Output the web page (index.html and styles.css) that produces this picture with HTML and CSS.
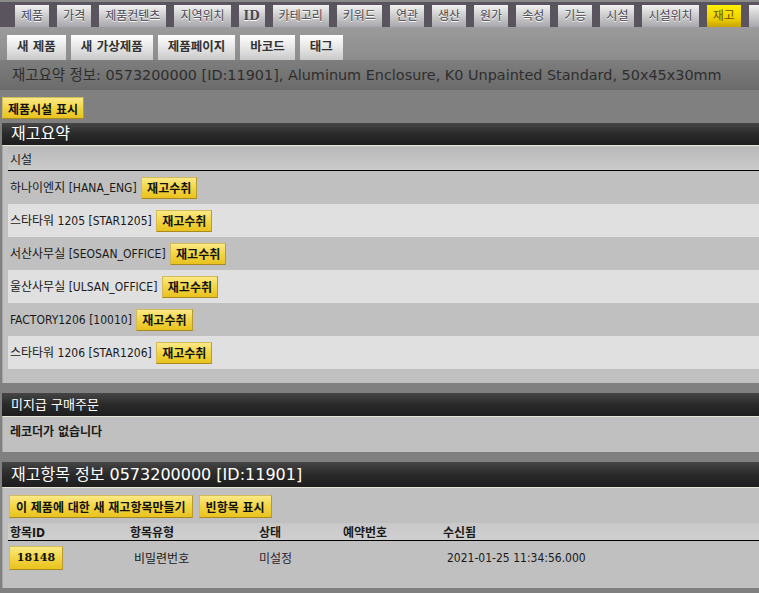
FILE: index.html
```html
<!DOCTYPE html>
<html lang="ko">
<head>
    <meta charset="UTF-8">
    <meta name="viewport" content="width=device-width, initial-scale=1.0">
    <title>재고요약</title>
    <link rel="stylesheet" href="styles.css">
</head>
<body>
    <div class="nav">
        <span class="tab">제품</span>
        <span class="tab">가격</span>
        <span class="tab">제품컨텐츠</span>
        <span class="tab">지역위치</span>
        <span class="tab tab-id">ID</span>
        <span class="tab">카테고리</span>
        <span class="tab">키워드</span>
        <span class="tab">연관</span>
        <span class="tab">생산</span>
        <span class="tab">원가</span>
        <span class="tab">속성</span>
        <span class="tab">기능</span>
        <span class="tab">시설</span>
        <span class="tab">시설위치</span>
        <span class="tab active">재고</span>
        <span class="tab tab-more"></span>
    </div>
    <div class="subnav">
        <span class="sub-btn">새 제품</span>
        <span class="sub-btn">새 가상제품</span>
        <span class="sub-btn">제품페이지</span>
        <span class="sub-btn">바코드</span>
        <span class="sub-btn">태그</span>
    </div>
    <div class="page-title">재고요약 정보: 0573200000 [ID:11901], Aluminum Enclosure, K0 Unpainted Standard, 50x45x30mm</div>

    <div class="toolbar">
        <button class="btn">제품시설 표시</button>
    </div>

    <!-- 재고요약 -->
    <div class="section-head big">재고요약</div>
    <div class="panel panel-summary">
        <table class="grid">
            <thead>
                <tr><th>시설</th></tr>
            </thead>
            <tbody>
                <tr><td>하나이엔지 [HANA_ENG] <button class="btn">재고수취</button></td></tr>
                <tr class="alt"><td>스타타워 1205 [STAR1205] <button class="btn">재고수취</button></td></tr>
                <tr><td>서산사무실 [SEOSAN_OFFICE] <button class="btn">재고수취</button></td></tr>
                <tr class="alt"><td>울산사무실 [ULSAN_OFFICE] <button class="btn">재고수취</button></td></tr>
                <tr><td>FACTORY1206 [10010] <button class="btn">재고수취</button></td></tr>
                <tr class="alt"><td>스타타워 1206 [STAR1206] <button class="btn">재고수취</button></td></tr>
            </tbody>
        </table>
    </div>

    <!-- 미지급 구매주문 -->
    <div class="section-head small">미지급 구매주문</div>
    <div class="panel panel-empty">
        <div class="empty">레코더가 없습니다</div>
    </div>

    <!-- 재고항목 -->
    <div class="section-head big tall">재고항목 정보 0573200000 [ID:11901]</div>
    <div class="panel panel-items">
        <div class="actions">
            <button class="btn btn-lg">이 제품에 대한 새 재고항목만들기</button>
            <button class="btn btn-lg">빈항목 표시</button>
        </div>
        <table class="grid items">
            <thead>
                <tr>
                    <th class="c1">항목ID</th>
                    <th class="c2">항목유형</th>
                    <th class="c3">상태</th>
                    <th class="c4">예약번호</th>
                    <th class="c5">수신됨</th>
                </tr>
            </thead>
            <tbody>
                <tr>
                    <td><button class="btn btn-id">18148</button></td>
                    <td class="indent">비밀련번호</td>
                    <td class="status">미설정</td>
                    <td></td>
                    <td class="indent">2021-01-25 11:34:56.000</td>
                </tr>
            </tbody>
        </table>
    </div>
</body>
</html>
```

FILE: styles.css
```css
body {
    margin: 0;
    background-color: #808080;
    font-family: "DejaVu Sans Condensed", "Noto Sans CJK KR", sans-serif;
    font-size: 12px;
    color: #1a1a1a;
    overflow: hidden;
}
button {
    font-family: inherit;
}

/* top tabs */
.nav {
    display: flex;
    gap: 8px;
    height: 27px;
    padding: 3px 0 0 15px;
    border-top: 2px solid #8a8a8a;
    background-color: #59545d;
    white-space: nowrap;
    overflow: hidden;
    box-sizing: border-box;
}
.tab {
    flex: none;
    height: 22px;
    line-height: 22px;
    padding: 0 6px;
    font-size: 12px;
    color: #4a4650;
    background: linear-gradient(#f2f2f2, #c4c4c6 60%, #a9a8ad);
    text-shadow: 0 1px 0 #fff;
}
.tab-id {
    font-family: "DejaVu Serif", serif;
    font-weight: bold;
    padding: 0 5px;
}
.tab-more {
    width: 30px;
}
.tab.active {
    color: #6a5200;
    background: linear-gradient(#fff200, #f0d200 60%, #c8a400);
    text-shadow: none;
}

/* sub buttons */
.subnav {
    display: flex;
    gap: 5px;
    height: 33px;
    padding: 8px 0 0 7px;
    box-sizing: border-box;
    background: linear-gradient(#9b9b9b, #8c8c8c);
}
.sub-btn {
    height: 25px;
    line-height: 24px;
    padding: 0 10px;
    font-family: "DejaVu Sans", "Noto Sans CJK KR", sans-serif;
    font-size: 12.5px;
    font-weight: bold;
    color: #333;
    background: linear-gradient(#ffffff, #e6e6e6 50%, #c9c9c9);
}

.page-title {
    height: 30px;
    line-height: 30px;
    padding-left: 12px;
    font-family: "DejaVu Sans", "Noto Sans CJK KR", sans-serif;
    font-size: 14.4px;
    color: #2e2e2e;
    background: linear-gradient(#7e7e7e, #6b6b6b);
    white-space: nowrap;
    overflow: hidden;
}

.toolbar {
    padding: 7px 0 4px 2px;
}

/* yellow buttons */
.btn {
    height: 22px;
    padding: 0 5px;
    font-size: 12px;
    font-weight: bold;
    color: #111;
    border: 1px solid #d4bb5a;
    border-right-color: #b89a30;
    border-bottom-color: #a88a20;
    background: linear-gradient(#fbe986, #f3d748 45%, #e9c21e);
    vertical-align: middle;
    cursor: pointer;
}
.btn-lg {
    height: 23px;
    padding: 0 6px;
}
.btn-id {
    width: 54px;
    height: 24px;
    font-family: "DejaVu Serif", serif;
    font-size: 11px;
    color: #101010;
}

/* sections */
.section-head {
    margin-left: 2px;
    color: #fff;
    padding-left: 9px;
    font-family: "DejaVu Sans", "Noto Sans CJK KR", sans-serif;
    background: linear-gradient(#454545, #2a2a2a 50%, #1d1d1d);
    white-space: nowrap;
}
.section-head.big {
    height: 22px;
    line-height: 22px;
    font-size: 16px;
}
.section-head.big.tall {
    height: 25px;
    line-height: 25px;
    margin-top: 10px;
}
.section-head.small {
    height: 23px;
    line-height: 23px;
    font-size: 13px;
    margin-top: 10px;
}
.panel {
    margin-left: 2px;
    background-color: #c0c0c0;
    border-left: 1px solid #a6a6a6;
    border-top: 1px solid #e6e4d6;
    padding-left: 5px;
}
.panel-summary {
    padding-top: 1px;
    padding-bottom: 14px;
}
.panel-empty {
    height: 35px;
    padding-left: 7px;
}
.panel-items {
    padding-top: 7px;
    height: 93px;
}

.empty {
    font-weight: bold;
    line-height: 30px;
}

/* tables */
.grid {
    width: 100%;
    border-collapse: collapse;
}
.grid th {
    height: 23px;
    padding: 0 2px;
    text-align: left;
    font-weight: normal;
    background: linear-gradient(#b9b9b9, #cbcbcb);
    border-bottom: 1px solid #000;
}
.grid td {
    height: 33px;
    padding: 0 2px;
    background-color: #c0c0c0;
    white-space: nowrap;
}
.grid tr.alt td {
    background-color: #e0e0e0;
}
.grid td .btn {
    margin-left: 1px;
}

.actions {
    display: flex;
    gap: 6px;
    margin-left: 1px;
}
.items {
    margin-top: 5px;
}
.items th {
    height: 17px;
    font-weight: bold;
    background: linear-gradient(#c8c8c8, #d0d0d0);
}
.items td {
    height: 33px;
}
.items td .btn-id {
    margin-left: 0;
}
.items .c1 { width: 116px; }
.items .c2 { width: 125px; }
.items .c3 { width: 80px; }
.items .c4 { width: 96px; }
.items td:first-child {
    padding-left: 1px;
}
.indent {
    padding-left: 6px !important;
}
.status {
    color: #2e1e30;
}
```
